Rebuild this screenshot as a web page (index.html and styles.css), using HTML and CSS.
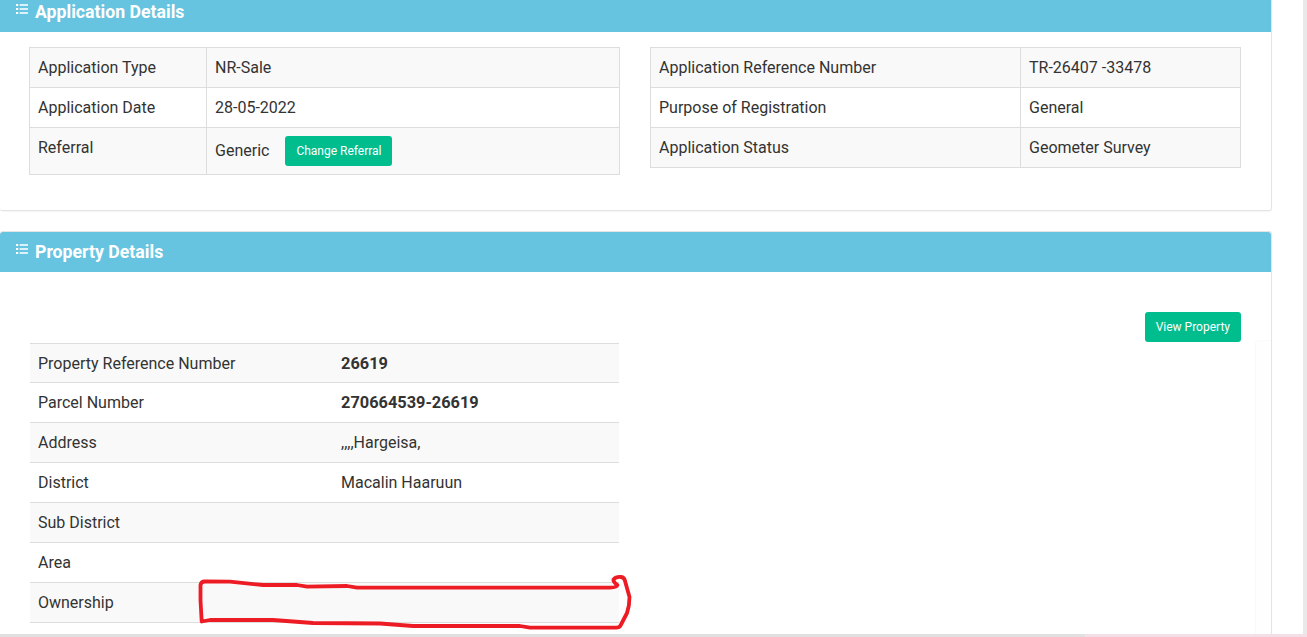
FILE: index.html
```html
<!DOCTYPE html>
<html lang="en">
<head>
<meta charset="utf-8">
<title>Application Details</title>
<link rel="stylesheet" href="styles.css">
</head>
<body>
<div class="page">
  <main class="content">
    <section class="panel panel-app">
      <header class="panel-head">
        <svg class="list-icon" viewBox="0 0 12 10" aria-hidden="true"><path d="M0 0h2.2v2H0zM0 4h2.2v2H0zM0 8h2.2v2H0zM3.6 .3H12v1.5H3.6zM3.6 4.2H12v1.5H3.6zM3.6 8.2H12v1.5H3.6z"/></svg>
        <h2 class="panel-title">Application Details</h2>
      </header>
      <div class="panel-body app-body">
        <table class="grid grid-left">
          <tr class="odd"><td class="c-label">Application Type</td><td>NR-Sale</td></tr>
          <tr><td class="c-label">Application Date</td><td>28-05-2022</td></tr>
          <tr class="odd tall"><td class="c-label">Referral</td><td class="c-ref"><div class="ref-row"><span>Generic</span><a class="btn btn-ref">Change Referral</a></div></td></tr>
        </table>
        <table class="grid grid-right">
          <tr class="odd"><td class="c-label">Application Reference Number</td><td>TR-26407 -33478</td></tr>
          <tr><td class="c-label">Purpose of Registration</td><td>General</td></tr>
          <tr class="odd"><td class="c-label">Application Status</td><td>Geometer Survey</td></tr>
        </table>
      </div>
    </section>
    <section class="panel panel-prop">
      <header class="panel-head">
        <svg class="list-icon" viewBox="0 0 12 10" aria-hidden="true"><path d="M0 0h2.2v2H0zM0 4h2.2v2H0zM0 8h2.2v2H0zM3.6 .3H12v1.5H3.6zM3.6 4.2H12v1.5H3.6zM3.6 8.2H12v1.5H3.6z"/></svg>
        <h2 class="panel-title">Property Details</h2>
      </header>
      <div class="panel-body prop-body">
        <div class="actions"><a class="btn">View Property</a></div>
        <table class="prop">
          <tr class="odd first"><td class="p-label">Property Reference Number</td><td><b>26619</b></td></tr>
          <tr><td class="p-label">Parcel Number</td><td><b>270664539-26619</b></td></tr>
          <tr class="odd"><td class="p-label">Address</td><td>,,,,Hargeisa,</td></tr>
          <tr><td class="p-label">District</td><td>Macalin Haaruun</td></tr>
          <tr class="odd"><td class="p-label">Sub District</td><td></td></tr>
          <tr><td class="p-label">Area</td><td></td></tr>
          <tr class="odd"><td class="p-label">Ownership</td><td></td></tr>
        </table>
      </div>
    </section>
  </main>
  <div class="scrollbar"></div>
  <div class="bottom-strip"></div>
  <svg class="scribble" viewBox="0 0 1307 637" aria-hidden="true"><path d="M201.7 621.5L200.5 600L200.5 585Q201 581.5 205 581.5L230 581.7L263 585L297 585L307 586.7L347 586L357 587.7L610 587.7Q617 587.5 617.5 585Q613 582 613.5 579.5Q616 576.5 621 577Q624.5 577.5 625 581L629.5 597Q629.5 606 627 613L620.5 625.5Q619.5 627.7 616 627.7L530 627.7L520 626L413 626L380 623.5L313 623L273 620L210 620Z"/></svg>
</div>
</body>
</html>
```
FILE: styles.css
```css
* { box-sizing: border-box; }
html, body { margin: 0; padding: 0; height: 100%; overflow: hidden; background: #fff; }
body { font-family: Roboto, "Liberation Sans", sans-serif; font-size: 16px; color: #333; }
.page { position: relative; width: 1307px; height: 637px; overflow: hidden; background: #fff; }
.content { width: 1272px; margin-top: -8px; display: flex; flex-direction: column; gap: 20px; }
.panel { background: #fff; border: 1px solid #e4e4e4; border-left: 0; border-radius: 3px; box-shadow: 0 1px 1px rgba(0,0,0,.04); }
.panel-app { height: 219px; }
.panel-app .panel-head { margin-top: -1px; }
.panel-prop { height: 500px; display: flex; flex-direction: column; }
.panel-head { height: 40px; flex: none; background: #67c4e0; color: #fff; display: flex; align-items: flex-start; padding: 12px 0 0 16px; border-radius: 3px 3px 0 0; }
.list-icon { width: 12px; height: 10px; fill: #fff; flex: none; }
.panel-title { margin: -3px 0 0 7px; font-size: 17.7px; line-height: 22px; font-weight: 700; }
.panel-body { padding: 15px 30px 0 29px; }
.app-body { display: flex; gap: 30px; align-items: flex-start; }
.grid { width: 591px; border-collapse: collapse; table-layout: fixed; }
.grid td { border: 1px solid #ddd; padding: 0 8px; height: 40px; line-height: 20px; }
.grid .c-label { width: 177px; }
.grid-right .c-label { width: 370px; }
.odd td { background: #f9f9f9; }
.tall td { height: 47px; vertical-align: top; padding-top: 10px; }
.grid .c-ref { padding-top: 8px; padding-right: 0; }
.ref-row { display: flex; align-items: center; gap: 16px; height: 30px; }
.btn { display: inline-block; background: #00bd8d; color: #fff; font-size: 12px; line-height: 30px; height: 30px; padding: 0 11px; border-radius: 3px; }
.btn-ref { padding-right: 10px; }
.prop-body { position: relative; flex: 1; padding: 40px 30px 0 30px; }
.prop-body::after { content: ""; position: absolute; top: 68px; left: 1255px; right: 0; bottom: 0; background: #fefefe; border-top: 1px solid #fbfbfb; border-left: 1px solid #f9f9f9; border-top-left-radius: 4px; }
.actions { display: flex; justify-content: flex-end; height: 31px; }
.prop { width: 589px; border-collapse: collapse; table-layout: fixed; }
.prop td { border-top: 1px solid #ddd; border-bottom: 1px solid #ddd; padding: 0 8px; height: 40px; line-height: 20px; }
.prop .first td { height: 39px; padding-top: 1px; }
.prop b { font-size: 16.35px; }
.p-label { width: 303px; }
.scrollbar { position: absolute; top: 0; right: 0; width: 4px; height: 634px; background: #e9e9e9; }
.bottom-strip { position: absolute; left: 0; right: 0; top: 634px; height: 3px; background: linear-gradient(90deg, #e2dfe0 0, #e2dfe0 83%, #f3dfe7 83%, #f3dfe7 100%); }
.scribble { position: absolute; inset: 0; width: 1307px; height: 637px; pointer-events: none; }
.scribble path { fill: none; stroke: #ed1c24; stroke-width: 3.8; stroke-linejoin: round; stroke-linecap: round; }
```
